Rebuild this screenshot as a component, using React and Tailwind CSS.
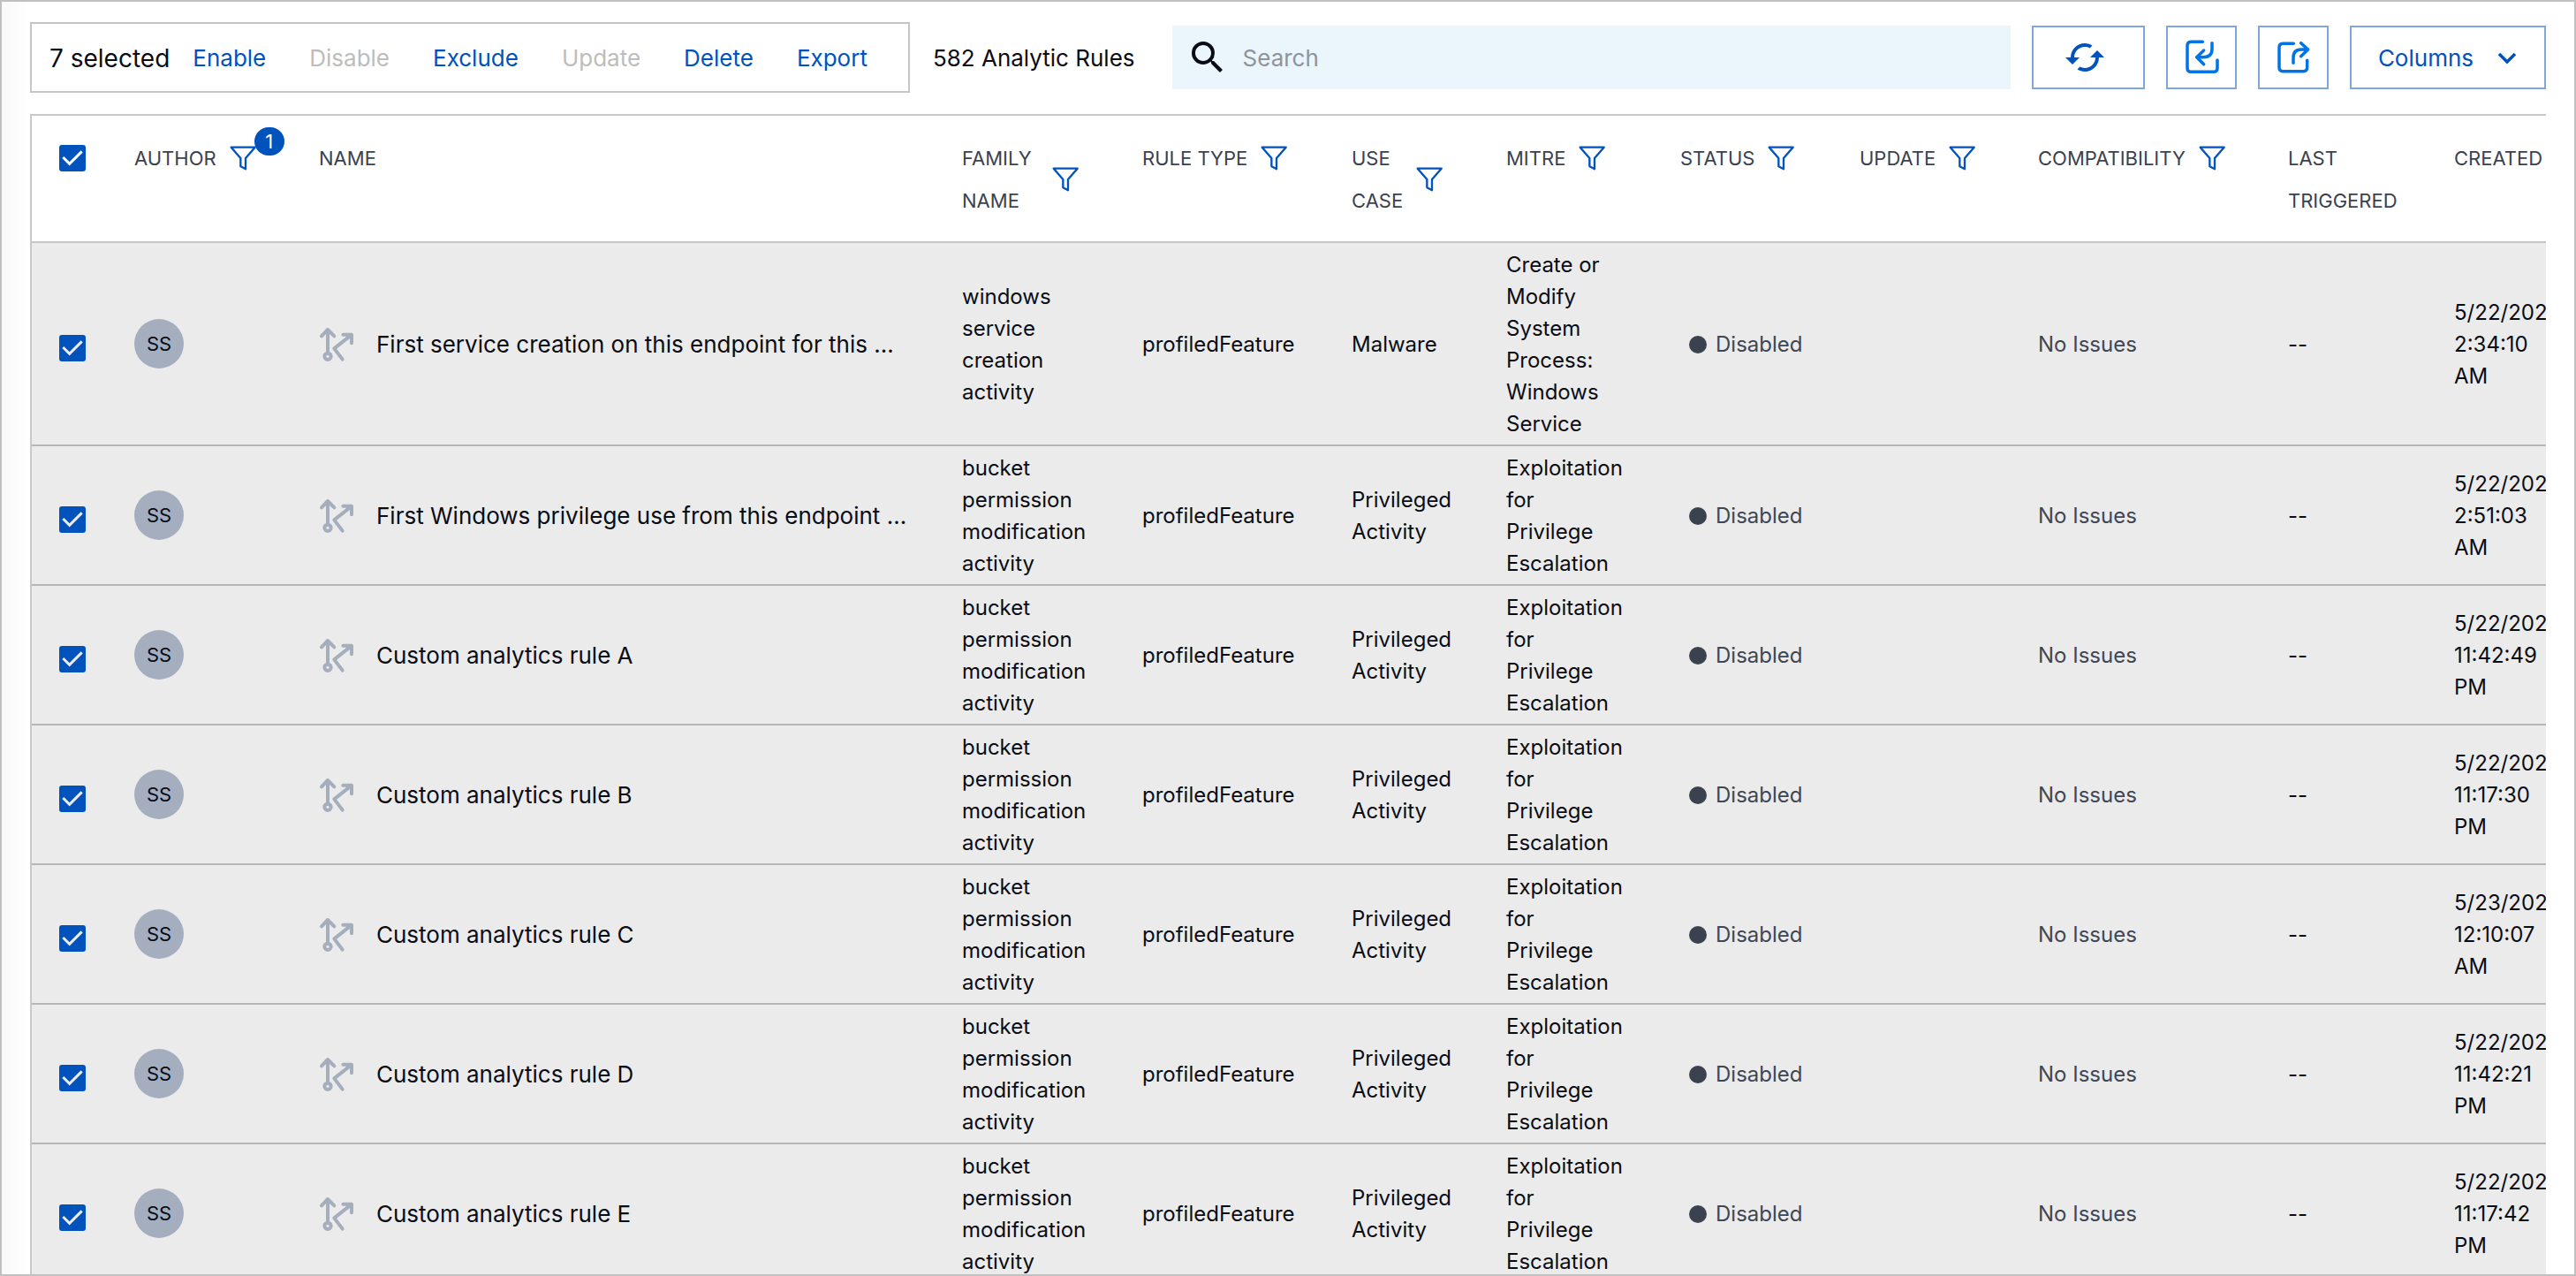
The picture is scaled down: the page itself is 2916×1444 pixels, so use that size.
import React, { useState } from 'react';

const PRIVILEGE_RULE = {
  family: 'bucket permission modification activity',
  useCase: 'Privileged Activity',
  mitre: 'Exploitation for Privilege Escalation',
};

const RULES = [
  {
    id: 1,
    name: 'First service creation on this endpoint for this ...',
    family: 'windows service creation activity',
    useCase: 'Malware',
    mitre: 'Create or Modify System Process: Windows Service',
    created: '5/22/2024, 2:34:10 AM',
  },
  { id: 2, name: 'First Windows privilege use from this endpoint ...', ...PRIVILEGE_RULE, created: '5/22/2024, 2:51:03 AM' },
  { id: 3, name: 'Custom analytics rule A', ...PRIVILEGE_RULE, created: '5/22/2024, 11:42:49 PM' },
  { id: 4, name: 'Custom analytics rule B', ...PRIVILEGE_RULE, created: '5/22/2024, 11:17:30 PM' },
  { id: 5, name: 'Custom analytics rule C', ...PRIVILEGE_RULE, created: '5/23/2024, 12:10:07 AM' },
  { id: 6, name: 'Custom analytics rule D', ...PRIVILEGE_RULE, created: '5/22/2024, 11:42:21 PM' },
  { id: 7, name: 'Custom analytics rule E', ...PRIVILEGE_RULE, created: '5/22/2024, 11:17:42 PM' },
];

const COLUMNS = [
  { label: 'Author', width: 'w-[209px]', filter: true, badge: 1 },
  { label: 'Name', width: '' },
  { label: 'Family Name', width: 'w-[204px]', filter: true, wrap: true },
  { label: 'Rule Type', width: 'w-[237px]', filter: true },
  { label: 'Use Case', width: 'w-[175px]', filter: true, wrap: true },
  { label: 'Mitre', width: 'w-[197px]', filter: true },
  { label: 'Status', width: 'w-[203px]', filter: true },
  { label: 'Update', width: 'w-[202px]', filter: true },
  { label: 'Compatibility', width: 'w-[283px]', filter: true },
  { label: 'Last Triggered', width: 'w-[188px]', wrap: true },
  { label: 'Created', width: 'w-[140px]' },
];

const ACTIONS = [
  { label: 'Enable' },
  { label: 'Disable', disabled: true },
  { label: 'Exclude' },
  { label: 'Update', disabled: true },
  { label: 'Delete' },
  { label: 'Export' },
];

const FilterIcon = () => (
  <svg className="block w-[30px] h-7" viewBox="60 108 90 84" fill="none" stroke="#0052bd" strokeWidth="7" strokeLinejoin="round">
    <path d="M65 113H146L114 150V187L97 178V150Z" />
  </svg>
);

const RuleIcon = () => (
  <svg className="size-[42px] shrink-0" viewBox="60 54 126 126" fill="none" stroke="#a5aebd" strokeWidth="12" strokeLinecap="round" strokeLinejoin="round">
    <circle cx="93" cy="157" r="11" />
    <path d="M93 146V66M72 88L93 66L115 88M143 167L115 130L172 85M145 83H174V112" />
  </svg>
);

const SearchIcon = () => (
  <svg className="size-12 shrink-0" viewBox="0 0 24 24" fill="#0a0c14">
    <path d="M15.5 14h-.79l-.28-.27A6.471 6.471 0 0 0 16 9.5 6.5 6.5 0 1 0 9.5 16c1.61 0 3.09-.59 4.23-1.57l.27.28v.79l5 4.99L20.49 19l-4.99-5zm-6 0C7.01 14 5 11.99 5 9.5S7.01 5 9.5 5 14 7.01 14 9.5 11.99 14 9.5 14z" />
  </svg>
);

const RefreshIcon = () => (
  <svg className="size-12" viewBox="0 0 24 24" fill="#0052bd">
    <path d="M19 8l-4 4h3c0 3.31-2.69 6-6 6-1.01 0-1.97-.25-2.8-.7l-1.46 1.46C8.97 19.54 10.43 20 12 20c4.42 0 8-3.58 8-8h3l-4-4zM6 12c0-3.31 2.69-6 6-6 1.01 0 1.97.25 2.8.7l1.46-1.46C15.03 4.46 13.57 4 12 4c-4.42 0-8 3.58-8 8H1l4 4 4-4H6z" />
  </svg>
);

const ImportIcon = () => (
  <svg className="size-[42px]" viewBox="547 72 126 126" fill="none" stroke="#0073e6" strokeWidth="10.5" strokeLinecap="round">
    <path d="M614 82H575Q562 82 562 95V171Q562 184 575 184H651Q664 184 664 171V144" />
    <path d="M646 86V106Q646 134 618 134H594M618 111L594 134L618 158" strokeLinejoin="round" />
  </svg>
);

const ExportIcon = () => (
  <svg className="size-[42px]" viewBox="858 72 126 126" fill="none" stroke="#0073e6" strokeWidth="10.5" strokeLinecap="round">
    <path d="M922 88H886Q873 88 873 101V169Q873 182 886 182H955Q968 182 968 169V145" />
    <path d="M921 154V136Q921 108 948 108H970M947 86L971 108L947 131" strokeLinejoin="round" />
  </svg>
);

const Checkbox = ({ checked, onChange, label, tick }) => (
  <label className="grid size-[30px] cursor-pointer">
    <input
      type="checkbox"
      aria-label={label}
      checked={checked}
      onChange={onChange}
      className="peer col-start-1 row-start-1 size-[30px] appearance-none rounded-[3px] border-2 border-[#0052bd] checked:bg-[#0052bd]"
    />
    <svg
      className={`col-start-1 row-start-1 size-[30px] pointer-events-none invisible peer-checked:visible ${tick}`}
      viewBox="0 0 90 90"
      fill="none"
      stroke="currentColor"
      strokeWidth="9"
    >
      <path d="M13 42L35 64L77 22" />
    </svg>
  </label>
);

const HeaderCell = ({ column }) => (
  <th scope="col" className="px-9 pt-6 pb-[22px] text-left align-top font-normal">
    <div className={`flex items-center ${column.wrap ? '' : 'whitespace-nowrap'}`}>
      <span className={column.wrap ? 'flex-1' : ''}>{column.label}</span>
      {column.filter && (
        <button type="button" aria-label={`Filter by ${column.label}`} className="relative ml-[15px] shrink-0">
          <FilterIcon />
          {column.badge && (
            <span className="absolute -top-[21px] left-7 flex h-8 w-[34px] items-center justify-center rounded-full bg-[#0052bd] leading-8 text-white">
              {column.badge}
            </span>
          )}
        </button>
      )}
    </div>
  </th>
);

const TextCell = ({ className = '', children }) => (
  <td className={`pt-[7px] pb-[5px] pl-9 ${className}`}>{children}</td>
);

const RuleRow = ({ rule, checked, onToggle }) => (
  <tr className="border-b-2 border-[#b6b6b6] bg-[#ebebeb]">
    <td className="pt-[10px] pl-[31px]">
      <Checkbox checked={checked} onChange={onToggle} label={`Select ${rule.name}`} tick="text-[#ebebeb]" />
    </td>
    <td className="py-1.5 pl-9">
      <span className="flex size-14 items-center justify-center rounded-full bg-[#a5aebf] text-[22px]">SS</span>
    </td>
    <td className="pt-[7px] pb-[5px] pl-[35px]">
      <div className="flex items-center gap-6 whitespace-nowrap text-[26px]">
        <RuleIcon />
        {rule.name}
      </div>
    </td>
    <TextCell className="pr-4">{rule.family}</TextCell>
    <TextCell className="pr-4">profiledFeature</TextCell>
    <TextCell className="pr-4">{rule.useCase}</TextCell>
    <TextCell className="pr-7">{rule.mitre}</TextCell>
    <td className="pt-[7px] pb-[5px] pl-[46px] text-[#3f4654]">
      <div className="flex items-center gap-[10px]">
        <span className="size-5 rounded-full bg-[#3b424f]" />
        Disabled
      </div>
    </td>
    <td />
    <TextCell className="pr-4 text-[#3f4654]">No Issues</TextCell>
    <TextCell className="pr-4">--</TextCell>
    <TextCell>{rule.created}</TextCell>
  </tr>
);

const App = () => {
  const [selected, setSelected] = useState(RULES.map((rule) => rule.id));
  const [search, setSearch] = useState('');

  const toggle = (id) =>
    setSelected(selected.includes(id) ? selected.filter((x) => x !== id) : [...selected, id]);

  const allSelected = selected.length === RULES.length;
  const toggleAll = () => setSelected(allSelected ? [] : RULES.map((rule) => rule.id));

  const outlined = 'flex h-full items-center border-2 border-[#7fa7dd]';

  return (
    <div className="flex h-screen flex-col overflow-hidden border-2 border-[#c0c0c0] bg-white pr-8 font-[Inter,sans-serif] text-[#0a0c14]">
      <div className="flex flex-1 flex-col overflow-hidden bg-linear-to-r from-[#f9f9f9] to-white to-[32px] pl-8">
        <header className="flex items-center pt-[23px] pb-6 text-[26px] leading-9">
          <div className="flex h-20 items-center gap-[49px] border-2 border-[#c6c6c6] pt-0.5 pr-[46px] pl-5">
            <div className="flex items-center gap-[26px]">
              <span className="text-[28px]">{selected.length} selected</span>
              <button type="button" className="text-[#0052bd]">{ACTIONS[0].label}</button>
            </div>
            {ACTIONS.slice(1).map((action) => (
              <button
                key={action.label}
                type="button"
                disabled={action.disabled}
                className="text-[#0052bd] disabled:text-[#bdbdbd]"
              >
                {action.label}
              </button>
            ))}
          </div>

          <span className="ml-[26px] pt-0.5 whitespace-nowrap">582 Analytic Rules</span>

          <label className="ml-[42px] flex h-[72px] flex-1 items-center gap-4 bg-[#eaf5fc] pl-4">
            <SearchIcon />
            <input
              type="search"
              aria-label="Search"
              placeholder="Search"
              value={search}
              onChange={(e) => setSearch(e.target.value)}
              className="min-w-0 flex-1 bg-transparent pt-0.5 outline-none placeholder:text-[#8e949e]"
            />
          </label>

          <div className="ml-6 flex h-[72px] gap-6">
            <button type="button" aria-label="Refresh" className={`${outlined} w-32 justify-center pr-2`}>
              <RefreshIcon />
            </button>
            <button type="button" aria-label="Import" className={`${outlined} w-20 justify-center`}>
              <ImportIcon />
            </button>
            <button type="button" aria-label="Export rules" className={`${outlined} w-20 justify-center`}>
              <ExportIcon />
            </button>
            <button type="button" className={`${outlined} gap-[26px] px-[30px] text-[#0052bd]`}>
              <span className="pt-0.5">Columns</span>
              <svg className="size-6" viewBox="0 0 24 24" fill="none" stroke="currentColor" strokeWidth="3.5">
                <path d="M3 8L12 17L21 8" />
              </svg>
            </button>
          </div>
        </header>

        <main className="flex-1 overflow-hidden border-t-2 border-l-2 border-[#c8c8c8] bg-white">
          <table className="w-full table-fixed border-collapse text-2xl leading-9">
            <colgroup>
              <col className="w-20" />
              {COLUMNS.map((column) => (
                <col key={column.label} className={column.width} />
              ))}
            </colgroup>
            <thead>
              <tr className="border-b-2 border-[#c6c6c6] text-[22px] leading-[48px] text-[#3b424f] uppercase">
                <th scope="col" className="pt-[33px] pl-[31px] align-top">
                  <Checkbox checked={allSelected} onChange={toggleAll} label="Select all rules" tick="text-white" />
                </th>
                {COLUMNS.map((column) => (
                  <HeaderCell key={column.label} column={column} />
                ))}
              </tr>
            </thead>
            <tbody>
              {RULES.map((rule) => (
                <RuleRow
                  key={rule.id}
                  rule={rule}
                  checked={selected.includes(rule.id)}
                  onToggle={() => toggle(rule.id)}
                />
              ))}
            </tbody>
          </table>
        </main>
      </div>
    </div>
  );
};

export default App;
